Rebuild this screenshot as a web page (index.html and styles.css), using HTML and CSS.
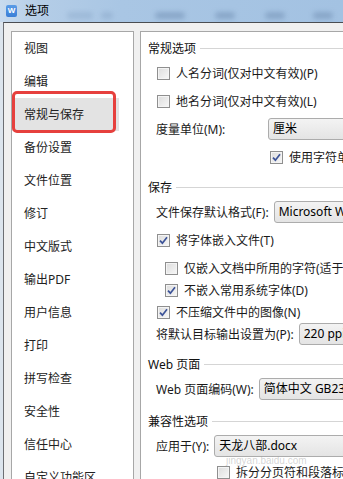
FILE: index.html
```html
<!DOCTYPE html>
<html lang="zh-CN">
<head>
<meta charset="utf-8">
<title>选项</title>
<link rel="stylesheet" href="styles.css">
</head>
<body>
<div class="titlebar">
  <span class="app-icon">W</span>
  <span class="title">选项</span>
  <span class="blur b1"></span>
  <span class="blur b2"></span>
  <span class="blur b3"></span>
  <span class="blur b4"></span>
  <span class="blur b5"></span>
  <span class="blur b6"></span>
</div>
<div class="frame">
  <div class="panes">
    <ul class="nav">
      <li>视图</li>
      <li>编辑</li>
      <li class="active">常规与保存</li>
      <li>备份设置</li>
      <li>文件位置</li>
      <li>修订</li>
      <li>中文版式</li>
      <li>输出PDF</li>
      <li>用户信息</li>
      <li>打印</li>
      <li>拼写检查</li>
      <li>安全性</li>
      <li>信任中心</li>
      <li>自定义功能区</li>
    </ul>
    <div class="content">
      <div class="sec first"><span>常规选项</span><i class="rule"></i></div>
      <div class="row"><span class="cb"></span><span>人名分词(仅对中文有效)(P)</span></div>
      <div class="row"><span class="cb"></span><span>地名分词(仅对中文有效)(L)</span></div>
      <div class="row field"><span class="label wide">度量单位(M):</span><span class="select">厘米</span></div>
      <div class="row under"><span class="cb checked"><svg viewBox="0 0 13 13"><path d="M3 6.6 L5.4 9.2 L10 3.2"/></svg></span><span>使用字符单位(H)</span></div>

      <div class="sec"><span>保存</span><i class="rule"></i></div>
      <div class="row field"><span class="label">文件保存默认格式(F):</span><span class="select">Microsoft Word 文件(*.docx)</span></div>
      <div class="row"><span class="cb checked"><svg viewBox="0 0 13 13"><path d="M3 6.6 L5.4 9.2 L10 3.2"/></svg></span><span>将字体嵌入文件(T)</span></div>
      <div class="row sub"><span class="cb"></span><span>仅嵌入文档中所用的字符(适于减小文件大小)(C)</span></div>
      <div class="row sub tight"><span class="cb checked"><svg viewBox="0 0 13 13"><path d="M3 6.6 L5.4 9.2 L10 3.2"/></svg></span><span>不嵌入常用系统字体(D)</span></div>
      <div class="row tight"><span class="cb checked"><svg viewBox="0 0 13 13"><path d="M3 6.6 L5.4 9.2 L10 3.2"/></svg></span><span>不压缩文件中的图像(N)</span></div>
      <div class="row field tight"><span class="label">将默认目标输出设置为(P):</span><span class="select">220 ppi</span></div>

      <div class="sec"><span>Web 页面</span><i class="rule"></i></div>
      <div class="row field"><span class="label">Web 页面编码(W):</span><span class="select">简体中文 GB2312</span></div>

      <div class="sec loose"><span>兼容性选项</span><i class="rule"></i></div>
      <div class="row field"><span class="label">应用于(Y):</span><span class="select">天龙八部.docx</span></div>
      <div class="row under2"><span class="cb"></span><span>拆分分页符和段落标记(A)</span></div>
    </div>
  </div>
</div>
<div class="highlight-mark"></div>
<div class="watermark">jingyan.baidu.com</div>
</body>
</html>
```

FILE: styles.css
```css
html, body {
  margin: 0;
  padding: 0;
}
body {
  width: 343px;
  height: 479px;
  overflow: hidden;
  position: relative;
  background: #dce5ee;
  font-family: "Noto Sans", "Noto Sans CJK SC", sans-serif;
  font-size: 12px;
  color: #1a1a1a;
}

/* title bar */
.titlebar {
  height: 22px;
  display: flex;
  align-items: center;
  background: linear-gradient(90deg, #c9dbee 0px, #b4cde7 40px, #a9c6e4 120px, #a3c2e2 343px);
  overflow: hidden;
}
.app-icon {
  width: 11px;
  height: 12px;
  margin-left: 6px;
  border-radius: 2px;
  background: linear-gradient(#5a9be6, #3a7ed6);
  color: #fff;
  font-family: "Liberation Sans", sans-serif;
  font-size: 8px;
  font-weight: bold;
  line-height: 12px;
  text-align: center;
}
.title {
  margin-left: 8px;
  font-size: 12px;
  line-height: 16px;
  color: #000;
}
.blur {
  height: 7px;
  border-radius: 4px;
  background: #7f9dc0;
  filter: blur(2.5px);
  opacity: 0.75;
  margin-top: 8px;
}
.b1 { width: 26px; margin-left: 18px; opacity: 0.35; }
.b2 { width: 12px; margin-left: 8px; opacity: 0.4; }
.b3 { width: 30px; margin-left: 42px; }
.b4 { width: 20px; margin-left: 30px; }
.b5 { width: 20px; margin-left: 30px; }
.b6 { width: 20px; margin-left: 28px; }

/* dialog frame */
.frame {
  margin-left: 3px;
  border-top: 1px solid #4a4d52;
  border-left: 1px solid #6c6f74;
  background: #f0f0f0;
  height: 460px;
}
.panes {
  display: flex;
  gap: 6px;
  padding: 8px 0 0 7px;
}

/* left navigation list */
.nav {
  list-style: none;
  margin: 0;
  padding: 0;
  width: 121px;
  height: 470px;
  flex: none;
  background: #fff;
  border: 1px solid #a7a7a7;
}
.nav li {
  height: 33px;
  line-height: 33px;
  padding-left: 12px;
  width: 95px;
  color: #222;
  font-size: 12px;
  white-space: nowrap;
}
.nav li.active {
  background: #e3e3e3;
}

/* right content */
.content {
  flex: none;
  width: 260px;
  height: 470px;
  background: #fff;
  border: 1px solid #a7a7a7;
  padding: 5px 0 0 7px;
  box-sizing: border-box;
}
.sec {
  display: flex;
  align-items: center;
  gap: 4px;
  height: 22px;
  margin-top: 8px;
  color: #111;
  white-space: nowrap;
}
.sec.first { margin-top: 0; }
.sec.loose { margin-top: 10px; }
.rule {
  flex: 1;
  height: 1px;
  background: #d5d5d5;
  margin-top: 1px;
}
.row {
  display: flex;
  align-items: center;
  height: 22px;
  margin-top: 6px;
  padding-left: 9px;
  white-space: nowrap;
}
.sec + .row { margin-top: 3px; }
.row.tight { margin-top: 0; }
.row.field { padding-left: 8px; }
.row.sub { padding-left: 17px; }
.row.under { padding-left: 122px; }
.row.under2 { padding-left: 69px; margin-top: 4px; }

.cb {
  width: 11px;
  height: 11px;
  flex: none;
  margin-right: 6px;
  border: 1px solid #8f8f8f;
  background: linear-gradient(135deg, #dcdcdc, #f7f7f7);
  box-shadow: inset 0 0 0 1px #f4f4f4;
  position: relative;
}
.cb svg {
  position: absolute;
  left: -1px;
  top: -1px;
  width: 13px;
  height: 13px;
}
.cb svg path {
  fill: none;
  stroke: #3c5398;
  stroke-width: 1.7;
}
.label { flex: none; }
.label.wide { width: 107px; }
.select {
  flex: none;
  width: 180px;
  height: 20px;
  line-height: 20px;
  margin-left: 5px;
  padding-left: 4px;
  border: 1px solid #acacac;
  border-radius: 3px;
  background: linear-gradient(#f3f3f3, #e4e4e4);
  color: #000;
  font-size: 12px;
  overflow: hidden;
}

/* red annotation frame over the selected item */
.highlight-mark {
  position: absolute;
  left: 12px;
  top: 91px;
  width: 98px;
  height: 36px;
  border: 3px solid #e6403d;
  border-radius: 5px;
}
.watermark {
  position: absolute;
  left: 226px;
  top: 455px;
  font-family: "Liberation Sans", sans-serif;
  font-size: 10px;
  color: rgba(160, 160, 160, 0.45);
}
```
